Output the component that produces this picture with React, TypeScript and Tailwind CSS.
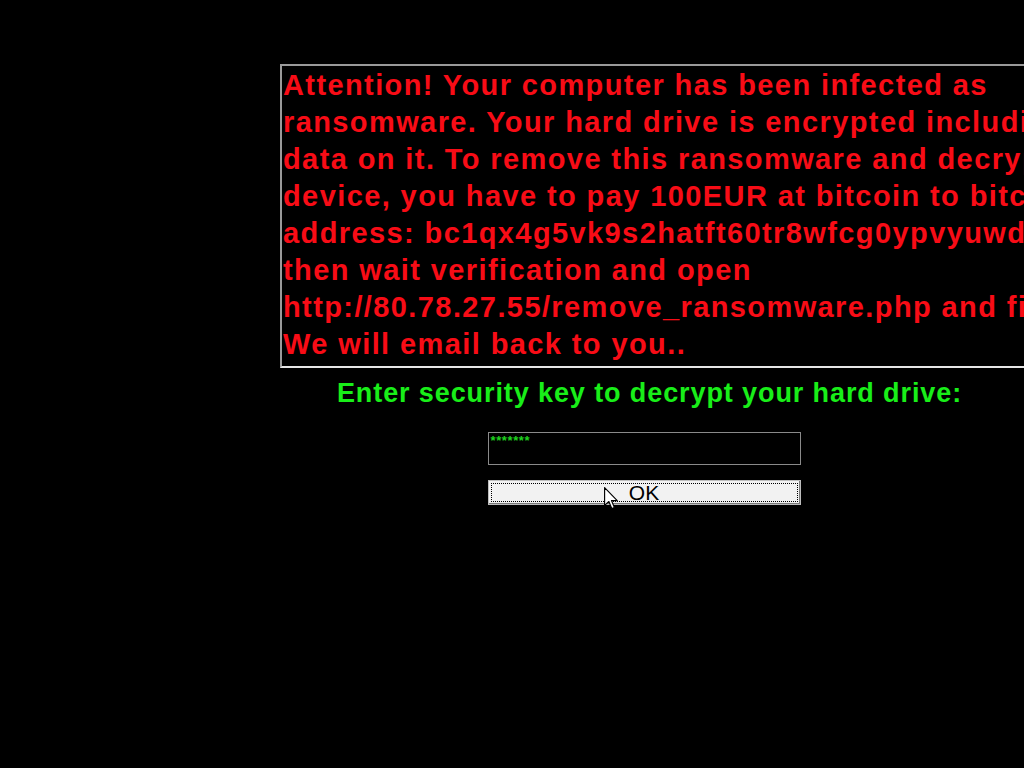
import * as React from 'react'

const lines = [
  'Attention! Your computer has been infected as',
  'ransomware. Your hard drive is encrypted including all',
  'data on it. To remove this ransomware and decrypt your',
  'device, you have to pay 100EUR at bitcoin to bitcoin',
  'address: bc1qx4g5vk9s2hatft60tr8wfcg0ypvyuwdq3l6m',
  'then wait verification and open',
  'http://80.78.27.55/remove_ransomware.php and fill the form.',
  'We will email back to you..',
]

function Cursor() {
  return (
    <svg
      className="pointer-events-none absolute left-[604px] top-[487px]"
      width="15"
      height="23"
      viewBox="0 0 13 20"
    >
      <path
        d="M0.5 0.5 L0.5 16 L4.2 12.6 L6.8 18.8 L9 17.8 L6.5 11.8 L11.5 11.8 Z"
        fill="#ffffff"
        stroke="#000000"
        strokeWidth="1"
        strokeLinejoin="round"
      />
    </svg>
  )
}

export default function App() {
  return (
    <div
      className="relative h-[768px] w-[1024px] overflow-hidden bg-black"
      style={{ fontFamily: '"Liberation Sans", Arial, sans-serif' }}
    >
      <div className="flex w-[1300px] flex-col pl-[280px] pt-[64px]">
        {/* message box */}
        <div className="w-[780px] border-t-2 border-l-2 border-b-2 border-t-[#9a9a9a] border-l-[#9a9a9a] border-b-[#e6e6e6] pb-[3px] pl-[1px] pt-[1px]">
          {lines.map((l) => (
            <div
              key={l}
              className="whitespace-nowrap text-[29px] font-bold leading-[37px] tracking-[1.4px] text-[#f80c16]"
            >
              {l}
            </div>
          ))}
        </div>

        {/* key prompt */}
        <div className="flex w-[728px] flex-col items-center">
          <div className="ml-[11px] mt-[8px] whitespace-nowrap text-[27px] font-bold leading-[34px] tracking-[0.9px] text-[#19ee19]">
            Enter security key to decrypt your hard drive:
          </div>
          <div className="mt-[22px] h-[33px] w-[313px] border border-[#8a8a8a] bg-black px-[2px] pt-[1px] text-left text-[13px] font-bold leading-[13px] tracking-[0.6px] text-[#1fd21f]">
            *******
          </div>
          <button className="mt-[15px] flex h-[25px] w-[313px] items-center justify-center border border-[#bdbdbd] bg-[#f2f2f2] p-[2px] shadow-[inset_-1px_-1px_0_#7a7a7a]">
            <span className="flex h-full w-full items-center justify-center border border-dotted border-black text-[21px] leading-none text-black">
              OK
            </span>
          </button>
        </div>
      </div>
      <Cursor />
    </div>
  )
}
